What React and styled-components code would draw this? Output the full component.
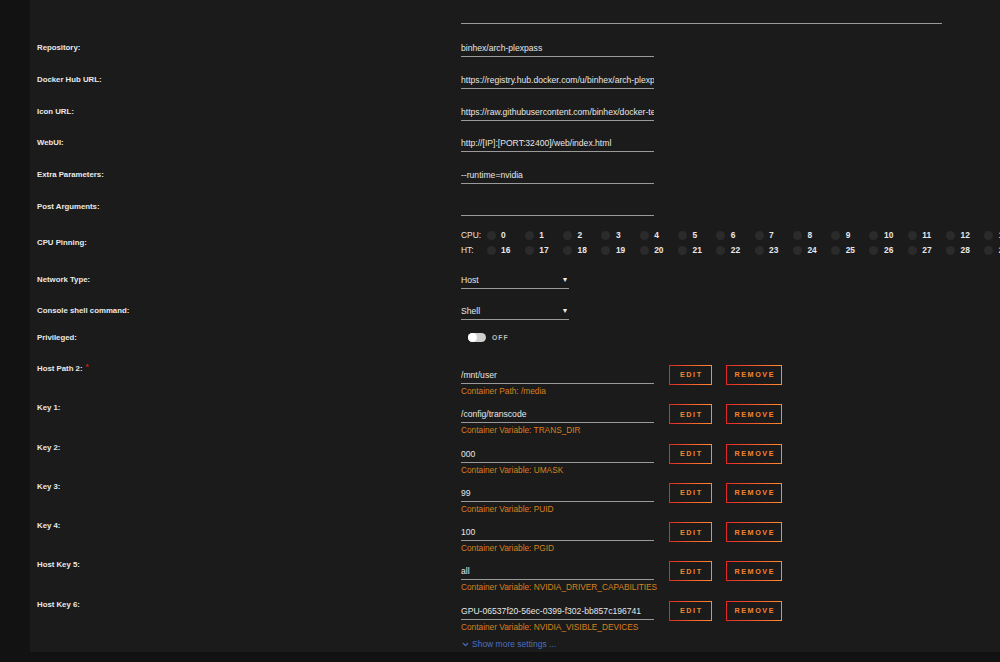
import React from "react";
import styled, { createGlobalStyle } from "styled-components";
import { ChevronDown } from "lucide-react";

const Global = createGlobalStyle`
  html, body { margin: 0; padding: 0; background: #121212; overflow: hidden; }
  * { box-sizing: border-box; }
`;

const Page = styled.div`
  width: 1000px;
  height: 662px;
  padding-left: 30px;
  background: #121212;
  font-family: "Liberation Sans", Arial, sans-serif;
  overflow: hidden;
`;

const Panel = styled.div`
  background: #1b1b1b;
  padding: 0 0 2px 7px;
  overflow: hidden;
`;

const Row = styled.div`
  display: grid;
  grid-template-columns: 424px 1fr;
  align-items: center;
  margin-top: ${(p) => p.$mt || 0}px;
  margin-bottom: ${(p) => p.$mb || 0}px;
  min-height: ${(p) => p.$h || 0}px;
`;

const Label = styled.div`
  font-size: 7.8px;
  font-weight: 700;
  line-height: 12px;
  color: #e9e9e9;
  white-space: nowrap;
`;

const Req = styled.span`
  color: #e01f1f;
  font-size: 8px;
  margin-left: 3px;
  position: relative;
  top: -2px;
`;

const Input = styled.div`
  width: ${(p) => p.$w || 193}px;
  height: 18px;
  line-height: 18px;
  border-bottom: 1px solid #9a9a9a;
  font-size: 8.6px;
  color: #e6e6e6;
  white-space: nowrap;
  overflow: hidden;
`;

const Select = styled(Input)`
  display: flex;
  justify-content: space-between;
  padding-right: 2px;
`;

const Caret = styled.span`
  font-size: 8px;
  color: #f0f0f0;
`;

const CpuBlock = styled.div`
  display: flex;
  flex-direction: column;
  overflow: hidden;
`;

const CpuLine = styled.div`
  display: flex;
  align-items: center;
  height: 15px;
  white-space: nowrap;
`;

const CpuTag = styled.div`
  width: 25.5px;
  flex: none;
  font-size: 8.4px;
  color: #e6e6e6;
`;

const CpuCell = styled.div`
  width: 38.3px;
  flex: none;
  display: flex;
  align-items: center;
`;

const Dot = styled.span`
  width: 9px;
  height: 9px;
  border-radius: 50%;
  background: #2b2b2b;
  margin-right: 5.5px;
  flex: none;
`;

const Num = styled.span`
  font-size: 8.4px;
  font-weight: 700;
  color: #e8e8e8;
`;

const ToggleWrap = styled.div`
  display: flex;
  align-items: center;
  padding-left: 7px;
  height: 14px;
`;

const Track = styled.span`
  width: 18px;
  height: 9px;
  border-radius: 5px;
  background: #cfcfcf;
  position: relative;
  margin-right: 6px;
`;

const Knob = styled.span`
  position: absolute;
  left: 0;
  top: 0;
  width: 9px;
  height: 9px;
  border-radius: 50%;
  background: #ffffff;
`;

const ToggleText = styled.span`
  font-size: 6.8px;
  font-weight: 700;
  letter-spacing: 1px;
  color: #bdbdbd;
`;

const MountRow = styled.div`
  display: grid;
  grid-template-columns: 424px 193px 1fr;
  align-items: start;
  height: 39.3px;
`;

const FieldCol = styled.div`
  display: flex;
  flex-direction: column;
  padding-top: 3px;
`;

const Hint = styled.div`
  font-size: 8.3px;
  line-height: 12px;
  margin-top: 1px;
  color: #d9801d;
  white-space: nowrap;
`;

const Buttons = styled.div`
  display: flex;
  gap: 14px;
  padding-left: 15px;
  padding-top: 2px;
`;

const Btn = styled.div`
  width: ${(p) => p.$w}px;
  height: 20px;
  border: 1.6px solid transparent;
  background: linear-gradient(#1b1b1b, #1b1b1b) padding-box,
    linear-gradient(90deg, #e22828 0%, #ff8c2f 100%) border-box;
  display: flex;
  align-items: center;
  justify-content: center;
`;

const BtnText = styled.span`
  font-size: 7.2px;
  font-weight: 700;
  letter-spacing: 1.6px;
  padding-left: 1.6px;
  color: #f4852f;
`;

const More = styled.div`
  height: 12px;
  display: flex;
  align-items: center;
  gap: 2px;
  padding-left: 424px;
  font-size: 8.5px;
  color: #4a70c2;
`;

const topFields = [
  ["Repository:", "binhex/arch-plexpass"],
  ["Docker Hub URL:", "https://registry.hub.docker.com/u/binhex/arch-plexpass/"],
  ["Icon URL:", "https://raw.githubusercontent.com/binhex/docker-templates/master/binhex/images/plex-icon.png"],
  ["WebUI:", "http://[IP]:[PORT:32400]/web/index.html"],
  ["Extra Parameters:", "--runtime=nvidia"],
  ["Post Arguments:", ""],
];

const mounts = [
  ["Host Path 2:", "/mnt/user", "Container Path: /media", true],
  ["Key 1:", "/config/transcode", "Container Variable: TRANS_DIR"],
  ["Key 2:", "000", "Container Variable: UMASK"],
  ["Key 3:", "99", "Container Variable: PUID"],
  ["Key 4:", "100", "Container Variable: PGID"],
  ["Host Key 5:", "all", "Container Variable: NVIDIA_DRIVER_CAPABILITIES"],
  ["Host Key 6:", "GPU-06537f20-56ec-0399-f302-bb857c196741", "Container Variable: NVIDIA_VISIBLE_DEVICES"],
];

const range = (a, n) => Array.from({ length: n }, (_, i) => a + i);

export default function App() {
  return (
    <Page>
      <Global />
      <Panel>
        <Row $mt={6} $mb={15}>
          <span />
          <Input $w={481} />
        </Row>
        {topFields.map(([l, v], i) => (
          <Row key={l} $mb={i === topFields.length - 1 ? 12 : 13.8}>
            <Label>{l}</Label>
            <Input>{v}</Input>
          </Row>
        ))}
        <Row $mb={13}>
          <Label>CPU Pinning:</Label>
          <CpuBlock>
            <CpuLine>
              <CpuTag>CPU:</CpuTag>
              {range(0, 14).map((n) => (
                <CpuCell key={n}>
                  <Dot />
                  <Num>{n}</Num>
                </CpuCell>
              ))}
            </CpuLine>
            <CpuLine>
              <CpuTag>HT:</CpuTag>
              {range(16, 14).map((n) => (
                <CpuCell key={n}>
                  <Dot />
                  <Num>{n}</Num>
                </CpuCell>
              ))}
            </CpuLine>
          </CpuBlock>
        </Row>
        <Row $mb={13}>
          <Label>Network Type:</Label>
          <Select $w={108}>
            <span>Host</span>
            <Caret>▾</Caret>
          </Select>
        </Row>
        <Row $mb={11}>
          <Label>Console shell command:</Label>
          <Select $w={108}>
            <span>Shell</span>
            <Caret>▾</Caret>
          </Select>
        </Row>
        <Row $mb={18} $h={14}>
          <Label>Privileged:</Label>
          <ToggleWrap>
            <Track>
              <Knob />
            </Track>
            <ToggleText>OFF</ToggleText>
          </ToggleWrap>
        </Row>
        {mounts.map(([l, v, h, req]) => (
          <MountRow key={l}>
            <Label>
              {l}
              {req && <Req>*</Req>}
            </Label>
            <FieldCol>
              <Input>{v}</Input>
              <Hint>{h}</Hint>
            </FieldCol>
            <Buttons>
              <Btn $w={43}>
                <BtnText>EDIT</BtnText>
              </Btn>
              <Btn $w={56}>
                <BtnText>REMOVE</BtnText>
              </Btn>
            </Buttons>
          </MountRow>
        ))}
        <More>
          <ChevronDown size={9} strokeWidth={3.5} />
          <span>Show more settings ...</span>
        </More>
      </Panel>
    </Page>
  );
}
